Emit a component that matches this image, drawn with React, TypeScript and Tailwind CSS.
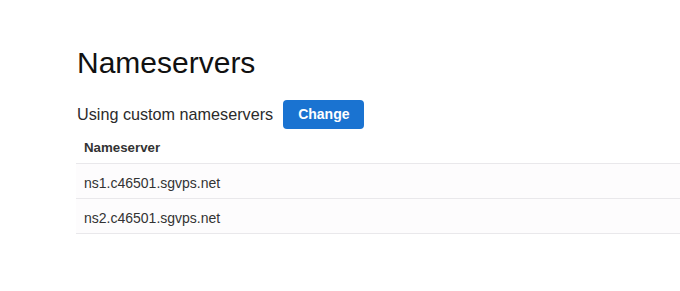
import React from 'react';

const servers = ['ns1.c46501.sgvps.net', 'ns2.c46501.sgvps.net'];

export default function App() {
  return (
    <div className="w-full min-h-[291px] bg-white font-['Liberation_Sans',Arial,sans-serif] pl-[76px] pt-[45px]">
      <h1 className="text-[30px] leading-[36px] text-[#111111] pl-[1px]">Nameservers</h1>

      <div className="mt-[19px] flex items-center gap-[10px] pl-[1px]">
        <span className="text-[16.2px] text-[#2b2b2b]">Using custom nameservers</span>
        <button className="h-[29px] px-[15px] rounded-[4px] bg-[#1a73d1] text-white text-[14px] font-bold">
          Change
        </button>
      </div>

      <div className="w-full">
        <div className="h-[35px] pt-[4px] flex items-center px-[8px] border-b border-[#e9e8eb]">
          <span className="text-[13.3px] font-bold text-[#333333]">Nameserver</span>
        </div>
        {servers.map((ns) => (
          <div
            key={ns}
            className="h-[35px] pt-[4px] flex items-center px-[8px] border-b border-[#e9e8eb] bg-[#fdfcfd]"
          >
            <span className="text-[14px] text-[#333333]">{ns}</span>
          </div>
        ))}
      </div>
    </div>
  );
}
